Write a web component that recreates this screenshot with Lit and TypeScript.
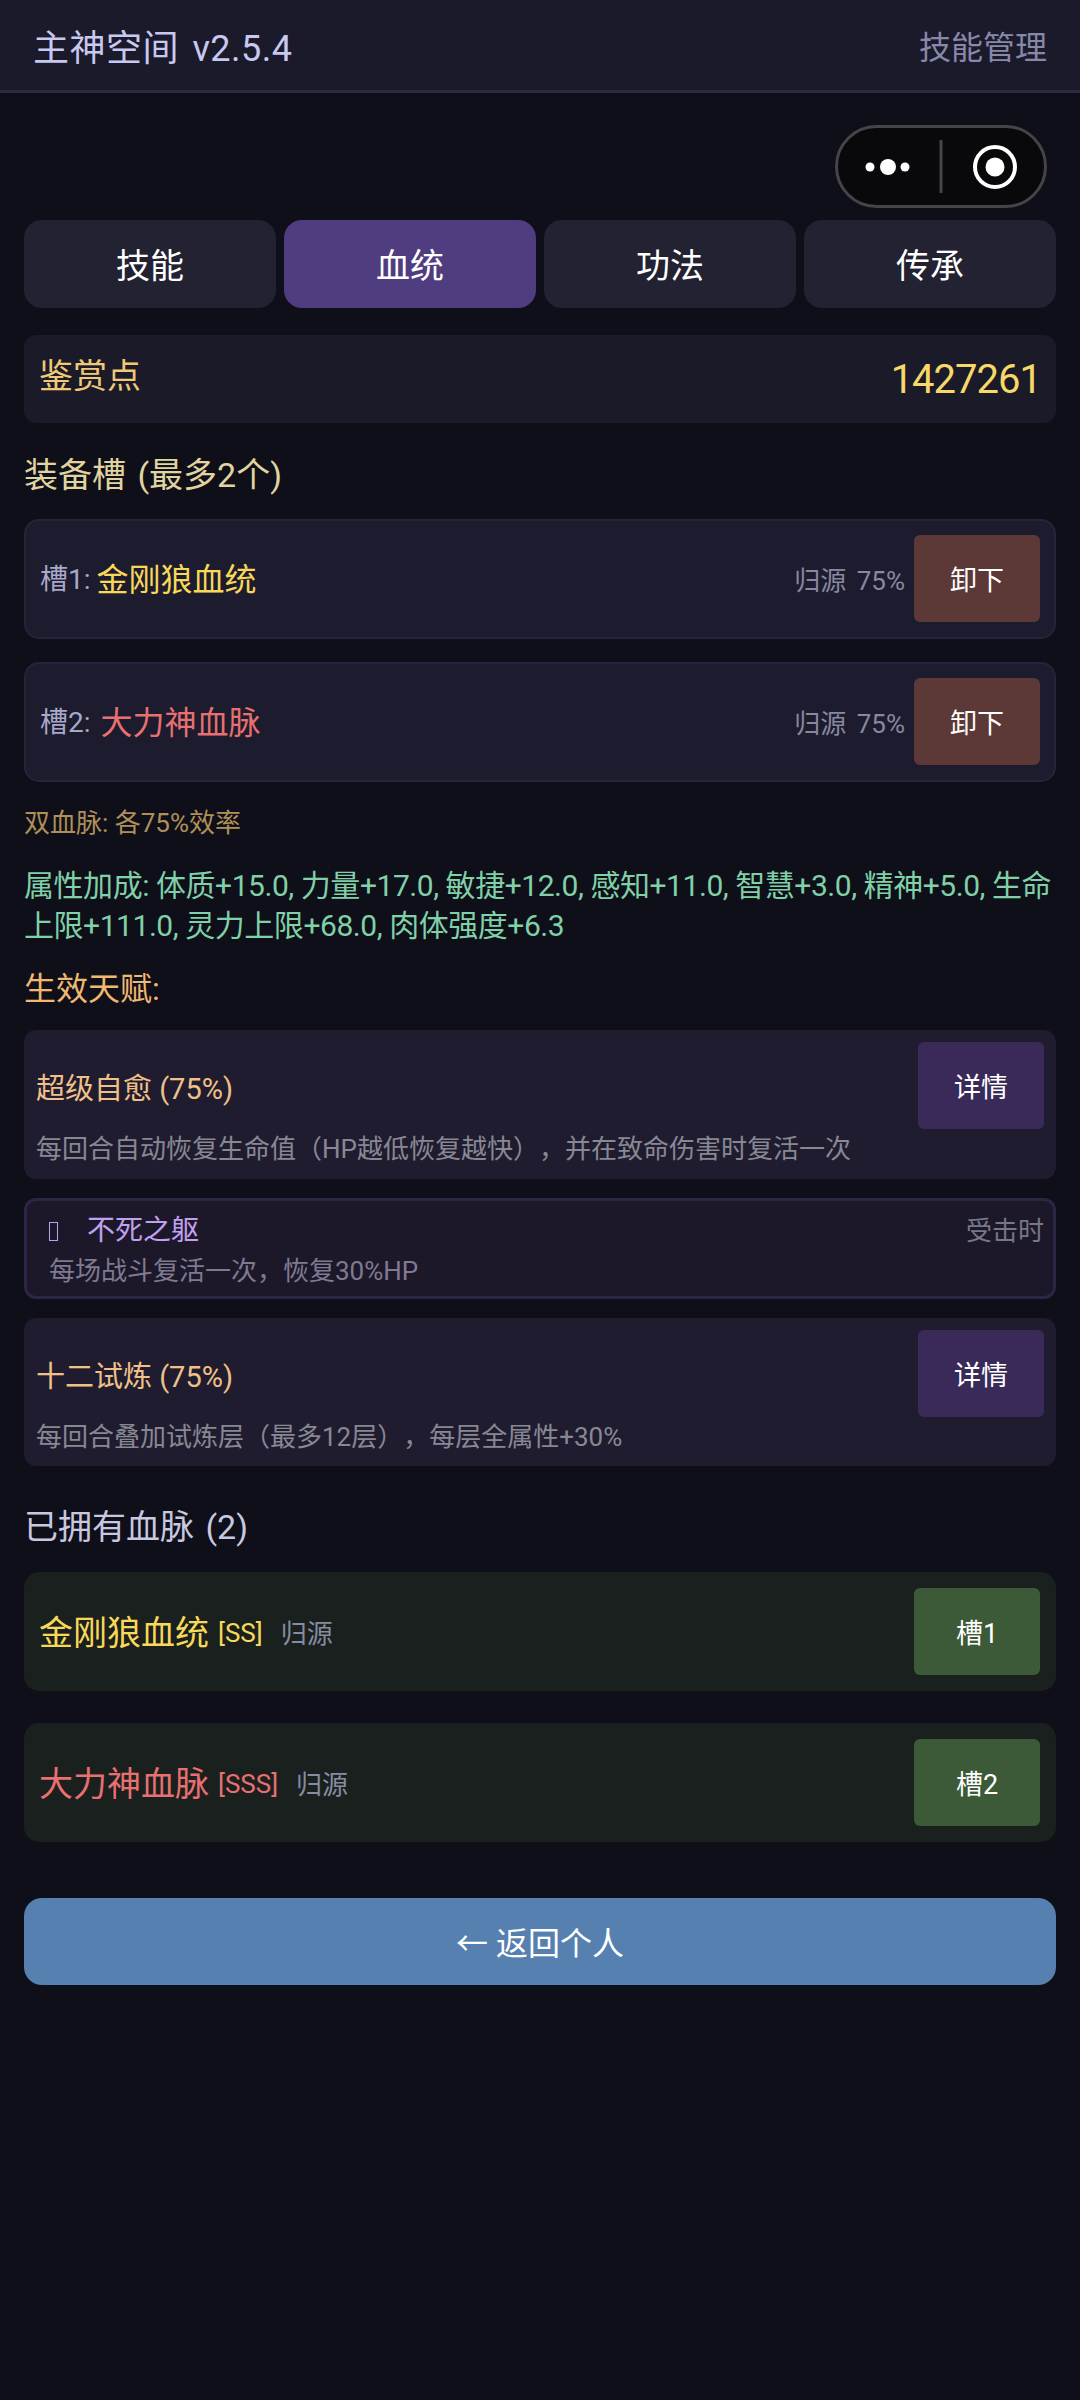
import { LitElement, html, css } from "lit";
import { customElement } from "lit/decorators.js";

@customElement("app-root")
export class AppRoot extends LitElement {
  static styles = css`
    :host { display: block; width: 1080px; min-height: 2400px; background: #0e0f18; font-family: Roboto, "Noto Sans CJK SC", "Noto Sans", sans-serif; color: #fff; text-spacing-trim: space-all; }
    * { box-sizing: border-box; }
    .topbar { height: 93px; background: #1a1a2a; border-bottom: 3px solid #2a2a40; display: flex; align-items: center; justify-content: space-between; padding: 0 33px; }
    .title { font-size: 36px; color: #c8c8f0; word-spacing: 4px; letter-spacing: 0.5px; }
    .mgr { font-size: 32px; color: #8888aa; }
    .capsule-row { display: flex; justify-content: flex-end; padding: 32px 33px 12px 0; }
    .capsule { width: 212px; height: 83px; display: block; }
    .main { padding: 0 24px; display: flex; flex-direction: column; }
    .tabs { display: grid; grid-template-columns: repeat(4, 1fr); gap: 8px; }
    .tab { height: 88px; border-radius: 18px; background: #222232; display: flex; align-items: center; justify-content: center; font-size: 34px; padding-bottom: 2px; }
    .tab.on { background: #503d80; }
    .points { margin-top: 27px; height: 88px; border-radius: 12px; background: #1a1a28; padding: 0 15px; display: flex; justify-content: space-between; align-items: flex-start; }
    .points .lbl { font-size: 34px; color: #f0c878; line-height: 40px; margin-top: 21px; }
    .points .val { font-size: 40px; letter-spacing: -1px; color: #f8d868; line-height: 56px; margin-top: 17px; }
    .h { font-size: 33px; line-height: 44px; }
    .h.equip { margin-top: 30px; font-size: 34px; word-spacing: 3px; color: #e0d4a0; }
    .slot { height: 120px; border: 2px solid #24243a; border-radius: 15px; background: #1c1c2e; display: flex; align-items: center; padding: 0 14px; }
    .slot.first { margin-top: 22px; }
    .slot.second { margin-top: 23px; }
    .slot .pre { font-size: 28px; color: #a8a8c8; margin-right: 6px; margin-bottom: 4px; }
    .slot.second .pre { margin-right: 10px; }
    .slot .name { font-size: 32px; margin-bottom: 4px; }
    .slot .eff { margin-left: auto; margin-right: 9px; font-size: 26px; word-spacing: 4px; color: #88889f; margin-bottom: 2px; }
    .slot .btn { margin-bottom: 2px; }
    .gold { color: #f8d858; }
    .red { color: #e87070; }
    .btn { width: 126px; height: 87px; border-radius: 6px; display: flex; align-items: center; justify-content: center; font-size: 27px; flex: none; }
    .btn.off { background: #5c3836; }
    .btn.info { background: #3a2a5a; }
    .btn.use { background: #3c5a38; }
    .dual { margin-top: 23px; font-size: 26px; line-height: 36px; color: #b09058; }
    .attr { margin-top: 25px; font-size: 30px; line-height: 40px; letter-spacing: -0.45px; color: #80d0a8; }
    .h.talent { margin-top: 21px; font-size: 32px; color: #f0b870; }
    .talent-card { background: #201c30; border-radius: 12px; height: 149px; padding: 12px 12px 0 12px; }
    .talent-card.t1 { margin-top: 19px; }
    .talent-card.t3 { margin-top: 19px; height: 148px; }
    .talent-top { display: flex; align-items: center; justify-content: space-between; }
    .talent-name { font-size: 29px; color: #f0c088; }
    .talent-desc { margin-top: 0; font-size: 26px; line-height: 40px; color: #888894; }
    .sub { margin-top: 19px; height: 101px; border: 3px solid #2b2645; border-radius: 12px; background: #1c182a; padding: 10px 9px 0 22px; }
    .sub-top { display: flex; align-items: center; line-height: 40px; }
    .tofu { width: 9px; height: 19px; border: 1.5px solid #c0a0f0; flex: none; margin-right: 29px; }
    .sub-name { font-size: 28px; color: #c0a0f0; }
    .sub-when { margin-left: auto; font-size: 26px; color: #77778a; }
    .sub-desc { font-size: 26px; line-height: 40px; color: #807a90; }
    .h.owned { margin-top: 39px; font-size: 34px; word-spacing: 3px; color: #c8c8e0; }
    .own { height: 119px; border-radius: 15px; background: #1a201e; display: flex; align-items: center; padding: 0 16px 0 15px; }
    .own.a { margin-top: 23px; }
    .own.b { margin-top: 32px; }
    .own .name { font-size: 34px; margin-bottom: 2px; }
    .own .rank { font-size: 26px; margin-left: 9px; margin-top: 2px; }
    .own .kind { font-size: 26px; color: #888ca0; margin-left: 18px; }
    .own .btn { margin-left: auto; }
    .back { margin-top: 56px; height: 87px; border-radius: 18px; background: #5580b0; display: flex; align-items: center; justify-content: center; font-size: 32px; padding-bottom: 2px; }
  `;

  private talent(name: string, desc: string, cls: string) {
    return html`<div class="talent-card ${cls}">
      <div class="talent-top"><span class="talent-name">${name}</span><span class="btn info">详情</span></div>
      <div class="talent-desc">${desc}</div>
    </div>`;
  }

  render() {
    return html`
      <div class="topbar"><span class="title">主神空间 v2.5.4</span><span class="mgr">技能管理</span></div>
      <div class="capsule-row">
        <svg class="capsule" viewBox="0 0 212 83" width="212" height="83">
          <rect x="1.5" y="1.5" width="209" height="80" rx="40" fill="#09090c" stroke="#444449" stroke-width="3"/>
          <circle cx="35" cy="42" r="4.5" fill="#fff"/><circle cx="53" cy="42" r="8" fill="#fff"/><circle cx="70" cy="42" r="4.5" fill="#fff"/>
          <rect x="104.5" y="15" width="3" height="53" fill="#444449"/>
          <circle cx="160" cy="42" r="20" fill="none" stroke="#fff" stroke-width="4"/><circle cx="160" cy="42" r="9.5" fill="#fff"/>
        </svg>
      </div>
      <div class="main">
        <div class="tabs">
          <div class="tab">技能</div><div class="tab on">血统</div><div class="tab">功法</div><div class="tab">传承</div>
        </div>
        <div class="points"><span class="lbl">鉴赏点</span><span class="val">1427261</span></div>
        <div class="h equip">装备槽 (最多2个)</div>
        <div class="slot first"><span class="pre">槽1:</span><span class="name gold">金刚狼血统</span><span class="eff">归源 75%</span><span class="btn off">卸下</span></div>
        <div class="slot second"><span class="pre">槽2:</span><span class="name red">大力神血脉</span><span class="eff">归源 75%</span><span class="btn off">卸下</span></div>
        <div class="dual">双血脉: 各75%效率</div>
        <div class="attr">属性加成: 体质+15.0, 力量+17.0, 敏捷+12.0, 感知+11.0, 智慧+3.0, 精神+5.0, 生命上限+111.0, 灵力上限+68.0, 肉体强度+6.3</div>
        <div class="h talent">生效天赋:</div>
        ${this.talent("超级自愈 (75%)", "每回合自动恢复生命值（HP越低恢复越快），并在致命伤害时复活一次", "t1")}
        <div class="sub">
          <div class="sub-top"><span class="tofu"></span><span class="sub-name">不死之躯</span><span class="sub-when">受击时</span></div>
          <div class="sub-desc">每场战斗复活一次，恢复30%HP</div>
        </div>
        ${this.talent("十二试炼 (75%)", "每回合叠加试炼层（最多12层），每层全属性+30%", "t3")}
        <div class="h owned">已拥有血脉 (2)</div>
        <div class="own a"><span class="name gold">金刚狼血统</span><span class="rank gold">[SS]</span><span class="kind">归源</span><span class="btn use">槽1</span></div>
        <div class="own b"><span class="name red">大力神血脉</span><span class="rank red">[SSS]</span><span class="kind">归源</span><span class="btn use">槽2</span></div>
        <div class="back">← 返回个人</div>
      </div>
    `;
  }
}
